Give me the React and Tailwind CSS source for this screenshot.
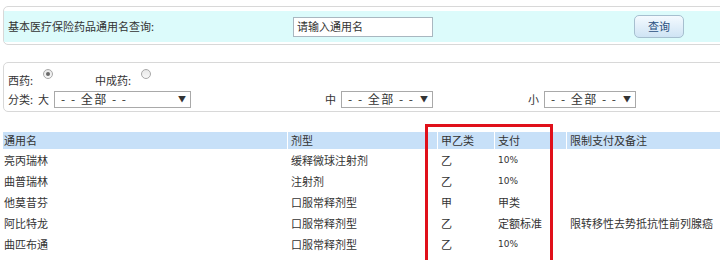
import React from 'react';

const font = { fontFamily: '"Noto Sans CJK SC", "Noto Sans", sans-serif' };

const rows = [
  { name: '亮丙瑞林', form: '缓释微球注射剂', cls: '乙', pay: '10%', note: '' },
  { name: '曲普瑞林', form: '注射剂', cls: '乙', pay: '10%', note: '' },
  { name: '他莫昔芬', form: '口服常释剂型', cls: '甲', pay: '甲类', note: '' },
  { name: '阿比特龙', form: '口服常释剂型', cls: '乙', pay: '定额标准', note: '限转移性去势抵抗性前列腺癌' },
  { name: '曲匹布通', form: '口服常释剂型', cls: '乙', pay: '10%', note: '' },
];

const Radio = ({ checked }) => (
  <span className="inline-flex w-[10px] h-[10px] rounded-full border border-[#a8a8a8] bg-gradient-to-b from-[#e8e8e8] to-[#f8f8f8] items-center justify-center relative -top-[6px] ml-[10px]">
    {checked && <span className="w-[4px] h-[4px] rounded-full bg-[#6a6a6a]" />}
  </span>
);

const Select = ({ w }) => (
  <div className={`${w} h-[17px] border border-[#a9a9a9] bg-white flex items-center justify-between pl-[6px] pr-[4px] text-[12px] text-[#333]`}>
    <span className="tracking-[1.5px]">- - 全部 - -</span>
    <span className="text-[8px] leading-none">▼</span>
  </div>
);

export default function App() {
  return (
    <div className="w-[720px] h-[260px] overflow-hidden bg-white relative text-[#333] text-[11px]" style={font}>
      <div className="pt-[6px] pl-[3px]">
        <div className="w-[730px] h-[39px] border border-[#d8d8d8] rounded-[5px] pt-[4px] bg-white">
          <div className="h-[31px] bg-[#dcfbfb] flex items-center">
            <span className="pl-[4px] w-[289px] shrink-0">基本医疗保险药品通用名查询:</span>
            <div className="w-[140px] h-[20px] shrink-0 border border-[#a9b7c0] bg-white flex items-center pl-[3px]">请输入通用名</div>
            <div className="w-[201px] shrink-0" />
            <button className="w-[50px] h-[23px] shrink-0 rounded-[5px] border border-[#a6bfcf] bg-gradient-to-b from-[#f4faff] to-[#cfe4f4] text-[#2a4f7e] text-[11px] flex items-center justify-center">查询</button>
          </div>
        </div>

        <div className="mt-[17px] w-[730px] h-[50px] border border-[#d8d8d8] rounded-[5px] px-[4px] pt-[8px]">
          <div className="flex items-center h-[18px]">
            <span>西药:</span>
            <Radio checked />
            <span className="ml-[42px]">中成药:</span>
            <Radio />
          </div>
          <div className="flex items-center h-[18px] mt-[1px]">
            <span>分类:</span>
            <span className="ml-[5px] mr-[5px]">大</span>
            <Select w="w-[137px]" />
            <span className="ml-[134px] mr-[5px]">中</span>
            <Select w="w-[92px]" />
            <span className="ml-[95px] mr-[5px]">小</span>
            <Select w="w-[92px]" />
          </div>
        </div>
      </div>

      <div className="mt-[20px] pl-[3px]">
        <div className="flex h-[17px] items-center gap-[1px]">
          <div className="w-[284px] shrink-0 h-full bg-[#c7e0f8] flex items-center pl-[1px]">通用名</div>
          <div className="w-[149px] shrink-0 h-full bg-[#c7e0f8] flex items-center pl-[3px]">剂型</div>
          <div className="w-[56px] shrink-0 h-full bg-[#c7e0f8] flex items-center pl-[3px]">甲乙类</div>
          <div className="w-[71px] shrink-0 h-full bg-[#c7e0f8] flex items-center pl-[3px]">支付</div>
          <div className="w-[200px] shrink-0 h-full bg-[#c7e0f8] flex items-center pl-[3px]">限制支付及备注</div>
        </div>
        {rows.map((r) => (
          <div key={r.name} className="flex h-[21px] items-center gap-[1px] pt-[2px]">
            <div className="w-[284px] shrink-0 pl-[1px]">{r.name}</div>
            <div className="w-[149px] shrink-0 pl-[3px]">{r.form}</div>
            <div className="w-[56px] shrink-0 pl-[3px]">{r.cls}</div>
            <div className={`w-[71px] shrink-0 pl-[3px] ${r.pay === '10%' ? 'text-[9px]' : ''}`} style={r.pay === '10%' ? { fontFamily: '"DejaVu Sans", sans-serif' } : undefined}>{r.pay}</div>
            <div className="w-[200px] shrink-0 pl-[3px] whitespace-nowrap">{r.note}</div>
          </div>
        ))}
      </div>

      <div className="absolute left-[425px] top-[124px] w-[128px] h-[150px] border-[3px] border-[#e0101a]" />
    </div>
  );
}
